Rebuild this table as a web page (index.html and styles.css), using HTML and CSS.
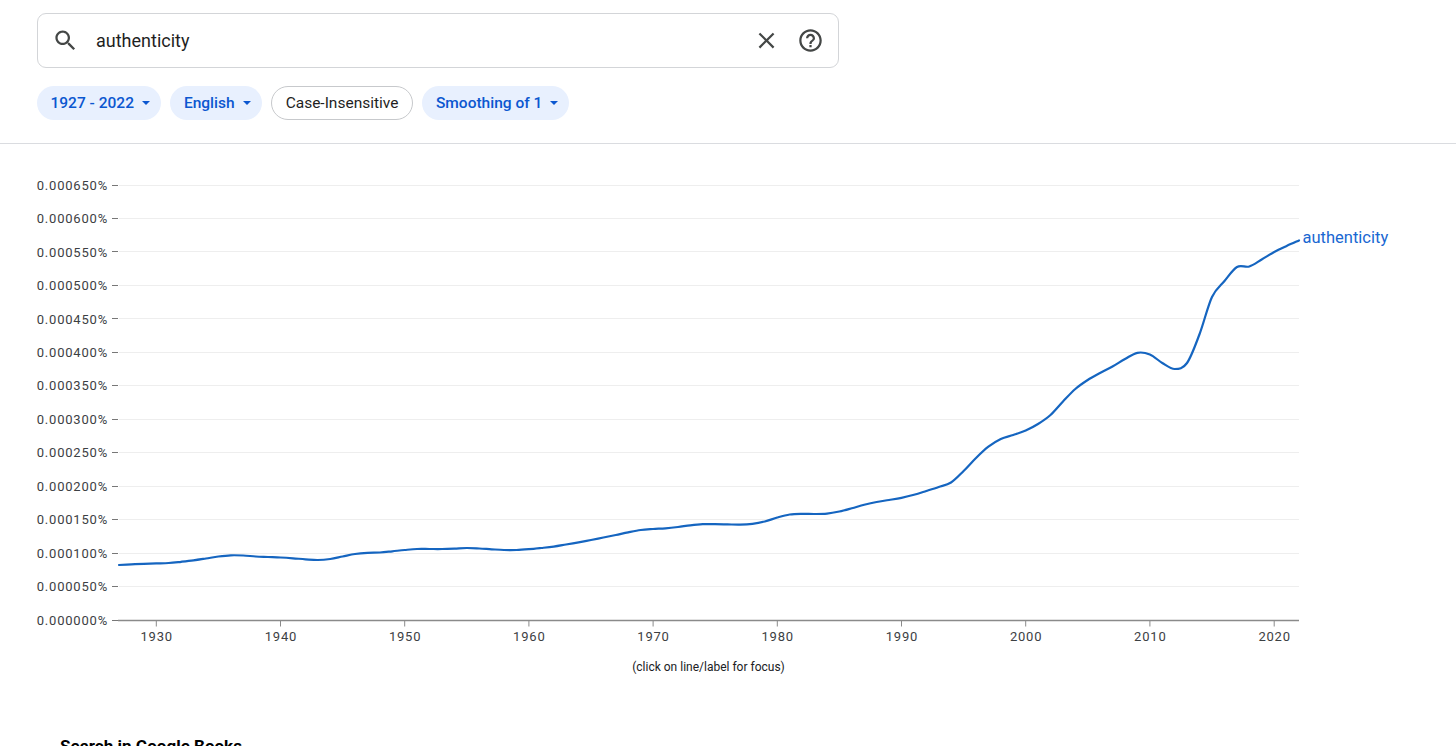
FILE: index.html
```html
<!DOCTYPE html>
<html lang="en">
<head>
<meta charset="utf-8">
<title>Google Books Ngram Viewer - authenticity</title>
<link rel="stylesheet" href="styles.css">
</head>
<body>
<header class="top">
  <div class="search">
    <svg class="icon" viewBox="0 0 24 24"><path d="M15.5 14h-.79l-.28-.27C15.41 12.59 16 11.11 16 9.5 16 5.91 13.09 3 9.5 3S3 5.910 3 9.5 5.91 16 9.5 16c1.61 0 3.09-.59 4.23-1.57l.27.28v.79l5 4.99L20.49 19l-4.99-5zm-6 0C7.01 14 5 11.990 5 9.5S7.01 5 9.5 5 14 7.01 14 9.5 11.99 14 9.5 14z"/></svg>
    <span class="query">authenticity</span>
    <svg class="icon clear" viewBox="0 0 24 24"><path d="M19 6.41 17.59 5 12 10.59 6.41 5 5 6.41 10.59 12 5 17.59 6.41 19 12 13.41 17.59 19 19 17.59 13.41 12z"/></svg>
    <svg class="icon" viewBox="0 0 24 24"><path d="M11 18h2v-2h-2v2zm1-16C6.48 2 2 6.48 2 12s4.48 10 10 10 10-4.48 10-10S17.52 2 12 2zm0 18c-4.41 0-8-3.59-8-8s3.59-8 8-8 8 3.59 8 8-3.59 8-8 8zm0-14c-2.21 0-4 1.79-4 4h2c0-1.1.9-2 2-2s2 .9 2 2c0 2-3 1.75-3 5h2c0-2.250 3-2.5 3-5 0-2.21-1.79-4-4-4z"/></svg>
  </div>
  <div class="chips">
    <div class="chip drop">1927 - 2022<span class="caret"></span></div>
    <div class="chip drop">English<span class="caret"></span></div>
    <div class="chip plain">Case-Insensitive</div>
    <div class="chip drop">Smoothing of 1<span class="caret"></span></div>
  </div>
</header>

<main class="chart-area">
  <svg class="chart" width="1456" height="556" viewBox="0 144 1456 556">
    <g class="grid">
      <line x1="119" x2="1299" y1="185.5" y2="185.5"/>
      <line x1="119" x2="1299" y1="218.5" y2="218.5"/>
      <line x1="119" x2="1299" y1="251.5" y2="251.5"/>
      <line x1="119" x2="1299" y1="285.5" y2="285.5"/>
      <line x1="119" x2="1299" y1="318.5" y2="318.5"/>
      <line x1="119" x2="1299" y1="352.5" y2="352.5"/>
      <line x1="119" x2="1299" y1="385.5" y2="385.5"/>
      <line x1="119" x2="1299" y1="419.5" y2="419.5"/>
      <line x1="119" x2="1299" y1="452.5" y2="452.5"/>
      <line x1="119" x2="1299" y1="486.5" y2="486.5"/>
      <line x1="119" x2="1299" y1="519.5" y2="519.5"/>
      <line x1="119" x2="1299" y1="553.5" y2="553.5"/>
      <line x1="119" x2="1299" y1="586.5" y2="586.5"/>
    </g>
    <g class="yticks">
      <line x1="112" x2="118" y1="185.5" y2="185.5"/>
      <line x1="112" x2="118" y1="218.5" y2="218.5"/>
      <line x1="112" x2="118" y1="251.5" y2="251.5"/>
      <line x1="112" x2="118" y1="285.5" y2="285.5"/>
      <line x1="112" x2="118" y1="318.5" y2="318.5"/>
      <line x1="112" x2="118" y1="352.5" y2="352.5"/>
      <line x1="112" x2="118" y1="385.5" y2="385.5"/>
      <line x1="112" x2="118" y1="419.5" y2="419.5"/>
      <line x1="112" x2="118" y1="452.5" y2="452.5"/>
      <line x1="112" x2="118" y1="486.5" y2="486.5"/>
      <line x1="112" x2="118" y1="519.5" y2="519.5"/>
      <line x1="112" x2="118" y1="553.5" y2="553.5"/>
      <line x1="112" x2="118" y1="586.5" y2="586.5"/>
      <line x1="112" x2="118" y1="620.5" y2="620.5"/>
    </g>
    <g class="ylabels">
      <text x="108" y="189.8">0.000650%</text>
      <text x="108" y="223.1">0.000600%</text>
      <text x="108" y="256.5">0.000550%</text>
      <text x="108" y="290">0.000500%</text>
      <text x="108" y="323.5">0.000450%</text>
      <text x="108" y="356.9">0.000400%</text>
      <text x="108" y="390.4">0.000350%</text>
      <text x="108" y="423.8">0.000300%</text>
      <text x="108" y="457.3">0.000250%</text>
      <text x="108" y="490.8">0.000200%</text>
      <text x="108" y="524.2">0.000150%</text>
      <text x="108" y="557.7">0.000100%</text>
      <text x="108" y="591.1">0.000050%</text>
      <text x="108" y="624.6">0.000000%</text>
    </g>
    <line class="xaxis" x1="118" x2="1299" y1="620.5" y2="620.5"/>
    <g class="xticks">
      <line x1="156.3" x2="156.3" y1="621" y2="626.5"/>
      <line x1="280.5" x2="280.5" y1="621" y2="626.5"/>
      <line x1="404.7" x2="404.7" y1="621" y2="626.5"/>
      <line x1="528.9" x2="528.9" y1="621" y2="626.5"/>
      <line x1="653.1" x2="653.1" y1="621" y2="626.5"/>
      <line x1="777.3" x2="777.3" y1="621" y2="626.5"/>
      <line x1="901.5" x2="901.5" y1="621" y2="626.5"/>
      <line x1="1025.7" x2="1025.7" y1="621" y2="626.5"/>
      <line x1="1149.9" x2="1149.9" y1="621" y2="626.5"/>
      <line x1="1274.2" x2="1274.2" y1="621" y2="626.5"/>
    </g>
    <g class="xlabels">
      <text x="156.7" y="641">1930</text>
      <text x="280.9" y="641">1940</text>
      <text x="405.1" y="641">1950</text>
      <text x="529.3" y="641">1960</text>
      <text x="653.5" y="641">1970</text>
      <text x="777.7" y="641">1980</text>
      <text x="901.9" y="641">1990</text>
      <text x="1026.1" y="641">2000</text>
      <text x="1150.3" y="641">2010</text>
      <text x="1274.6" y="641">2020</text>
    </g>
    <text class="hint" x="708.5" y="670.5">(click on line/label for focus)</text>
    <path id="trend" class="trend" d="M119 565 L131.4 564.3 L143.8 563.8 L156.3 563.4 L168.7 563 L181.1 561.8 L193.5 560.4 L206 558.5 L218.4 556.5 L230.8 555.3 L243.2 555.5 L255.7 556.5 L268 557 L280.5 557.5 L293 558.3 L305.4 559.3 L317.8 560 L330.2 559 L342.6 556.5 L355 554 L367.5 552.8 L380 552.5 L392.3 551.3 L404.7 550 L417 549 L429.5 549 L442 549 L454.4 548.6 L466.8 548 L479.2 548.5 L491.6 549.3 L504 550 L516.5 550 L529 549.2 L541.3 548 L553.7 546.6 L566 544.5 L578.6 542.3 L591 540 L603.4 537.5 L615.8 535 L628.2 532.3 L640.7 530 L653 529 L665.5 528.3 L678 527 L690.3 525.3 L702.7 524.2 L715 524.2 L727.5 524.4 L740 524.6 L752.4 523.8 L764.8 521.5 L777.3 517.5 L789.7 514.5 L802 513.8 L814.5 514 L827 513.6 L839.3 511.5 L851.8 508.3 L864.2 504.8 L876.6 502 L889 500 L901.5 497.8 L914 494.8 L926.3 491 L938.7 487 L951 482.5 L963.6 471 L976 458 L988.4 446.7 L1000.8 439 L1013.2 435 L1025.7 430.5 L1038 424 L1050.5 415 L1063 401.5 L1075.3 389 L1087.7 380 L1100 373 L1112.5 366.5 L1125 359 L1137.4 352.8 L1149.9 354.5 L1162.3 363 L1174.7 369 L1187 363 L1199.6 334 L1212 297 L1224.5 281 L1237 267 L1249.3 266.5 L1261.7 259.5 L1274.2 252 L1286.6 246 L1299 240.5"/>
    <text class="series" x="1302.5" y="242.5">authenticity</text>
  </svg>
</main>

<section class="books">
  <h2>Search in Google Books</h2>
</section>
<script src="script.js"></script>
</body>
</html>
```

FILE: styles.css
```css
html, body {
  margin: 0;
  padding: 0;
  background: #ffffff;
  overflow: hidden;
}

body {
  font-family: Roboto, "Liberation Sans", Arial, sans-serif;
  color: #202124;
  width: 1456px;
  height: 746px;
}

.top {
  padding: 13px 0 23px 37px;
  border-bottom: 1px solid #dadce0;
}

.search {
  width: 802px;
  height: 55px;
  box-sizing: border-box;
  border: 1px solid #d3d5d8;
  border-radius: 9px;
  display: flex;
  align-items: center;
  padding: 0 14px;
}

.icon {
  width: 27px;
  height: 27px;
  flex: none;
  fill: #444746;
}

.query {
  flex: 1;
  margin-left: 17px;
  font-size: 18px;
  color: #1f1f1f;
}

.clear {
  margin-right: 17.5px;
}

.chips {
  display: flex;
  gap: 9.5px;
  margin-top: 18px;
}

.chip {
  height: 34px;
  box-sizing: border-box;
  border-radius: 17px;
  border: 1px solid transparent;
  display: flex;
  align-items: center;
  font-size: 15.5px;
  white-space: nowrap;
}

.chip.drop {
  background: #e8f0fe;
  color: #0b57d0;
  font-weight: 500;
  padding: 0 10px 0 12.5px;
}

.chip.plain {
  background: #ffffff;
  border-color: #c7c9cc;
  color: #1f1f1f;
  padding: 0 13.5px;
}

.caret {
  margin-left: 8px;
  width: 0;
  height: 0;
  border-left: 4px solid transparent;
  border-right: 4px solid transparent;
  border-top: 4.5px solid currentColor;
}

.chart-area {
  display: block;
}

.chart {
  display: block;
}

.grid line {
  stroke: #eeeeee;
  stroke-width: 1;
}

.yticks line {
  stroke: #777777;
  stroke-width: 1;
}

.xaxis {
  stroke: #8a8a8a;
  stroke-width: 1.4;
}

.xticks line {
  stroke: #8a8a8a;
  stroke-width: 1;
}

.ylabels text {
  font-family: Roboto, "Liberation Sans", sans-serif;
  font-size: 13px;
  letter-spacing: 0.8px;
  fill: #3c4043;
  text-anchor: end;
}

.xlabels text {
  font-family: Roboto, "Liberation Sans", sans-serif;
  font-size: 13px;
  letter-spacing: 0.8px;
  fill: #3c4043;
  text-anchor: middle;
}

.hint {
  font-family: Roboto, "Liberation Sans", sans-serif;
  font-size: 12px;
  fill: #202124;
  text-anchor: middle;
}

.trend {
  fill: none;
  stroke: #1565c0;
  stroke-width: 2.2;
  stroke-linejoin: round;
  stroke-linecap: round;
}

.series {
  font-family: Roboto, "Liberation Sans", sans-serif;
  font-size: 16.5px;
  fill: #1967d2;
}

.books {
  padding-left: 60px;
  margin-top: 36px;
}

.books h2 {
  margin: 0;
  font-size: 17px;
  line-height: 20px;
  font-weight: 700;
  color: #000000;
}
```

FILE: script.js
```js
(function () {
  var path = document.getElementById('trend');
  if (!path) return;
  var nums = path.getAttribute('d').match(/-?\d+(\.\d+)?/g).map(Number);
  var pts = [];
  for (var i = 0; i + 1 < nums.length; i += 2) pts.push([nums[i], nums[i + 1]]);
  if (pts.length < 3) return;
  var d = 'M' + pts[0][0] + ' ' + pts[0][1];
  for (var j = 0; j < pts.length - 1; j++) {
    var p0 = pts[j - 1] || pts[j];
    var p1 = pts[j];
    var p2 = pts[j + 1];
    var p3 = pts[j + 2] || p2;
    var c1x = p1[0] + (p2[0] - p0[0]) / 6;
    var c1y = p1[1] + (p2[1] - p0[1]) / 6;
    var c2x = p2[0] - (p3[0] - p1[0]) / 6;
    var c2y = p2[1] - (p3[1] - p1[1]) / 6;
    d += ' C' + c1x.toFixed(2) + ' ' + c1y.toFixed(2) + ' ' + c2x.toFixed(2) + ' ' + c2y.toFixed(2) + ' ' + p2[0] + ' ' + p2[1];
  }
  path.setAttribute('d', d);
})();
```
